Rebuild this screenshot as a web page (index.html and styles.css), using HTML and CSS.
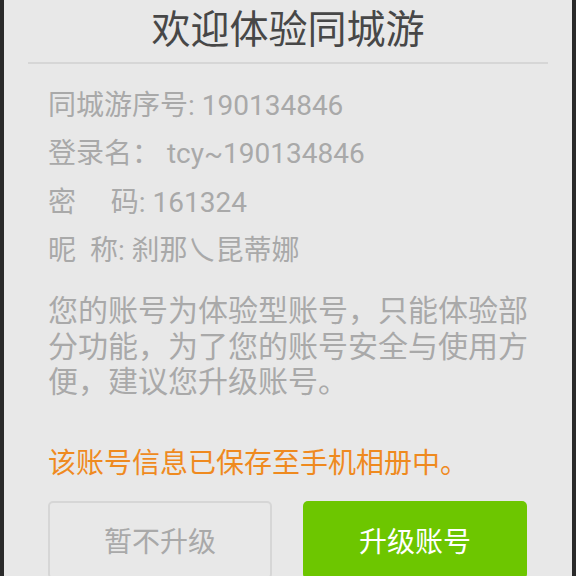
FILE: index.html
```html
<!DOCTYPE html>
<html lang="zh-CN">
<head>
    <meta charset="UTF-8">
    <meta name="viewport" content="width=device-width, initial-scale=1.0">
    <title>欢迎体验同城游</title>
    <link rel="stylesheet" href="styles.css">
</head>
<body>
    <div class="dialog">
        <h1 class="title">欢迎体验同城游</h1>
        <div class="divider"></div>

        <div class="content">
            <ul class="info">
                <li>同城游序号: 190134846</li>
                <li>登录名： tcy~190134846</li>
                <li>密     码: 161324</li>
                <li>昵  称: 刹那乀昆蒂娜</li>
            </ul>

            <p class="notice">您的账号为体验型账号，只能体验部分功能，为了您的账号安全与使用方便，建议您升级账号。</p>

            <p class="saved">该账号信息已保存至手机相册中。</p>

            <div class="buttons">
                <button class="btn btn-later">暂不升级</button>
                <button class="btn btn-upgrade">升级账号</button>
            </div>
        </div>
    </div>
</body>
</html>
```

FILE: styles.css
```css
body {
    margin: 0;
    padding: 0;
    background: #2a2a2a;
    font-family: Roboto, "Noto Sans CJK SC", sans-serif;
    height: 576px;
    overflow: hidden;
}

.dialog {
    margin: 0 4px;
    height: 576px;
    background: #e8e8e8;
}

.title {
    margin: 0;
    height: 62px;
    line-height: 60px;
    text-align: center;
    font-size: 39px;
    font-weight: normal;
    color: #474747;
}

.divider {
    margin: 0 24px;
    height: 2px;
    background: #d6d6d6;
}

.content {
    padding: 0 44px;
}

.info {
    list-style: none;
    margin: 18px 0 0;
    padding: 0;
}

.info li {
    font-size: 28px;
    line-height: 48.3px;
    color: #a9a9a9;
    white-space: pre;
}

.notice {
    margin: 18px 0 0;
    font-size: 30px;
    line-height: 35.5px;
    color: #a9a9a9;
}

.saved {
    margin: 46px 0 0;
    font-size: 28px;
    line-height: 36px;
    color: #ef8a1f;
}

.buttons {
    display: flex;
    gap: 31px;
    margin-top: 19px;
}

.btn {
    flex: none;
    width: 224px;
    height: 78px;
    font-family: inherit;
    font-size: 28px;
    border-radius: 5px;
    padding: 0;
}

.btn-later {
    background: #e8e8e8;
    color: #a9a9a9;
    border: 2px solid #d6d6d6;
}

.btn-upgrade {
    background: #6dc600;
    color: #ffffff;
    border: none;
}
```
